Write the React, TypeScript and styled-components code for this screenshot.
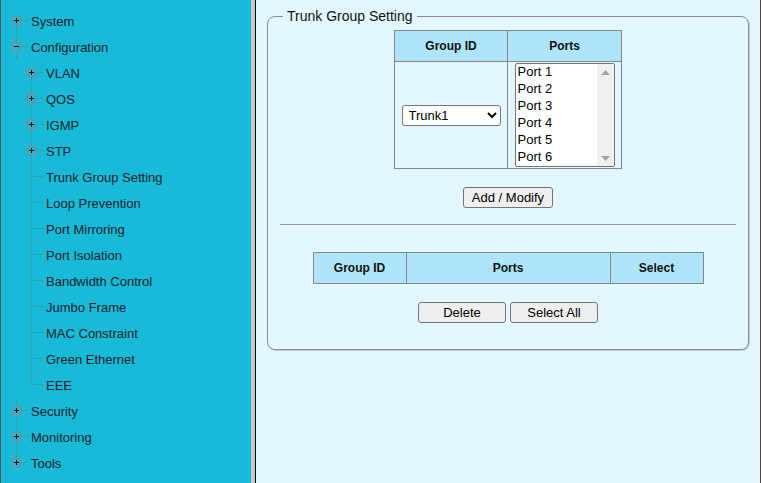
import styled, { createGlobalStyle } from "styled-components";

const GlobalStyle = createGlobalStyle`
  html, body {
    margin: 0;
    padding: 0;
    height: 100%;
  }
  body {
    font-family: "Liberation Sans", Arial, sans-serif;
    font-size: 13px;
    color: #000;
  }
  #root {
    height: 100%;
  }
`;

type Kind = "plus" | "minus" | "leaf";
type TreeNode = {
  label: string;
  level: 0 | 1;
  kind: Kind;
  first?: boolean;
  last?: boolean;
};

const tree: TreeNode[] = [
  { label: "System", level: 0, kind: "plus", first: true },
  { label: "Configuration", level: 0, kind: "minus" },
  { label: "VLAN", level: 1, kind: "plus", first: true },
  { label: "QOS", level: 1, kind: "plus" },
  { label: "IGMP", level: 1, kind: "plus" },
  { label: "STP", level: 1, kind: "plus" },
  { label: "Trunk Group Setting", level: 1, kind: "leaf" },
  { label: "Loop Prevention", level: 1, kind: "leaf" },
  { label: "Port Mirroring", level: 1, kind: "leaf" },
  { label: "Port Isolation", level: 1, kind: "leaf" },
  { label: "Bandwidth Control", level: 1, kind: "leaf" },
  { label: "Jumbo Frame", level: 1, kind: "leaf" },
  { label: "MAC Constraint", level: 1, kind: "leaf" },
  { label: "Green Ethernet", level: 1, kind: "leaf" },
  { label: "EEE", level: 1, kind: "leaf", last: true },
  { label: "Security", level: 0, kind: "plus" },
  { label: "Monitoring", level: 0, kind: "plus" },
  { label: "Tools", level: 0, kind: "plus", last: true },
];

const ports = ["Port 1", "Port 2", "Port 3", "Port 4", "Port 5", "Port 6"];

const Connector = ({ kind, first, last }: { kind: Kind; first?: boolean; last?: boolean }) => (
  <svg width={20} height={26} style={{ flex: "none" }}>
    <line x1={8.5} x2={8.5} y1={first ? 13 : 0} y2={last ? 13 : 26} stroke="#5f7d86" strokeDasharray="1 1" />
    <line x1={kind === "leaf" ? 9 : 13} x2={20} y1={12.5} y2={12.5} stroke="#5f7d86" strokeDasharray="1 1" />
    {kind !== "leaf" && (
      <>
        <rect x={4.5} y={8.5} width={8} height={8} fill="#17bbd7" stroke="#9b7f82" />
        <line x1={6} x2={11} y1={12.5} y2={12.5} stroke="#000" />
        {kind === "plus" && <line x1={8.5} x2={8.5} y1={10} y2={15} stroke="#000" />}
      </>
    )}
  </svg>
);

const Arrow = ({ up }: { up?: boolean }) => (
  <svg width={9} height={5}>
    <polygon points={up ? "0,5 9,5 4.5,0" : "0,0 9,0 4.5,5"} fill="#a3a3a3" />
  </svg>
);

export default function App() {
  return (
    <>
      <GlobalStyle />
      <Page>
        <Sidebar>
          {tree.map((n) => (
            <TreeRow key={n.label} level={n.level}>
              <Connector kind={n.kind} first={n.first} last={n.last} />
              <TreeLabel>{n.label}</TreeLabel>
            </TreeRow>
          ))}
        </Sidebar>
        <Divider />
        <Main>
          <Panel>
            <Legend>Trunk Group Setting</Legend>
            <GridTable width={227}>
              <colgroup>
                <col style={{ width: 113 }} />
                <col style={{ width: 114 }} />
              </colgroup>
              <thead>
                <tr>
                  <HeadCell>Group ID</HeadCell>
                  <HeadCell>Ports</HeadCell>
                </tr>
              </thead>
              <tbody>
                <tr>
                  <BodyCell>
                    <GroupSelect defaultValue="Trunk1">
                      <option>Trunk1</option>
                      <option>Trunk2</option>
                      <option>Trunk3</option>
                      <option>Trunk4</option>
                    </GroupSelect>
                  </BodyCell>
                  <BodyCell>
                    <ListBox>
                      <OptionList>
                        {ports.map((p) => (
                          <PortOption key={p}>{p}</PortOption>
                        ))}
                      </OptionList>
                      <ScrollTrack>
                        <Arrow up />
                        <Arrow />
                      </ScrollTrack>
                    </ListBox>
                  </BodyCell>
                </tr>
              </tbody>
            </GridTable>
            <ButtonRow top={18}>
              <Button width={90}>Add / Modify</Button>
            </ButtonRow>
            <Rule />
            <GridTable width={390} top={26}>
              <colgroup>
                <col style={{ width: 93 }} />
                <col style={{ width: 204 }} />
                <col style={{ width: 93 }} />
              </colgroup>
              <thead>
                <tr>
                  <HeadCell>Group ID</HeadCell>
                  <HeadCell>Ports</HeadCell>
                  <HeadCell>Select</HeadCell>
                </tr>
              </thead>
            </GridTable>
            <ButtonRow top={18}>
              <Button width={88}>Delete</Button>
              <Button width={88}>Select All</Button>
            </ButtonRow>
          </Panel>
        </Main>
      </Page>
    </>
  );
}

const Page = styled.div`
  display: flex;
  height: 100vh;
  overflow: hidden;
`;

const Sidebar = styled.div`
  flex: none;
  width: 251px;
  box-sizing: border-box;
  padding-top: 8px;
  background-color: #17bbd7;
  border-left: 1px solid #4d5a5e;
`;

const TreeRow = styled.div<{ level: 0 | 1 }>`
  display: flex;
  align-items: center;
  height: 26px;
  padding-left: ${({ level }) => (level === 0 ? 7 : 22)}px;
`;

const TreeLabel = styled.span`
  margin-left: 3px;
  font-size: 13px;
  color: #111b2a;
  white-space: nowrap;
`;

const Divider = styled.div`
  width: 4px;
  flex: none;
  background-color: #c9c9c9;
  border-right: 1px solid #000;
`;

const Main = styled.div`
  flex: 1;
  background-color: #e3f7fe;
  border-right: 1px solid #5b3f3f;
  padding: 8px 11px 0 11px;
`;

const Panel = styled.fieldset`
  margin: 0;
  padding: 6px 12px 26px;
  border: 1px solid #8a8a8a;
  border-radius: 8px;
  box-shadow: 1px 1px 0 #c4cdd0;
  min-width: 0;
`;

const Legend = styled.legend`
  margin-left: 3px;
  padding: 0 4px;
  font-size: 14px;
  line-height: 16px;
  color: #111;
`;

const GridTable = styled.table<{ width: number; top?: number }>`
  border-collapse: collapse;
  width: ${({ width }) => width}px;
  margin: ${({ top }) => top ?? 0}px auto 0;
  table-layout: fixed;
`;

const HeadCell = styled.th`
  height: 30px;
  padding: 0;
  background-color: #afe5fb;
  border: 1px solid #878787;
  font-size: 12px;
  font-weight: bold;
  color: #111;
`;

const BodyCell = styled.td`
  height: 106px;
  padding: 0;
  border: 1px solid #878787;
  text-align: center;
  vertical-align: middle;
`;

const GroupSelect = styled.select`
  width: 99px;
  height: 21px;
  font-family: "Liberation Sans", Arial, sans-serif;
  font-size: 13px;
  border: 1px solid #767676;
  border-radius: 3px;
  background: #fff;
  color: #000;
  padding: 0 2px;
`;

const ListBox = styled.div`
  display: flex;
  width: 100px;
  height: 104px;
  margin: 0 auto;
  box-sizing: border-box;
  border: 1px solid #767676;
  border-radius: 2px;
  background: #fff;
  text-align: left;
  overflow: hidden;
`;

const OptionList = styled.div`
  flex: 1;
  margin-top: -1px;
  padding-left: 2px;
`;

const PortOption = styled.div`
  font-size: 13px;
  line-height: 17px;
  color: #000;
`;

const ScrollTrack = styled.div`
  width: 17px;
  background: #f0f0f0;
  display: flex;
  flex-direction: column;
  align-items: center;
  justify-content: space-between;
  padding: 6px 0 5px;
`;

const ButtonRow = styled.div<{ top: number }>`
  display: flex;
  justify-content: center;
  gap: 4px;
  margin-top: ${({ top }) => top}px;
`;

const Button = styled.button<{ width: number }>`
  width: ${({ width }) => width}px;
  height: 21px;
  padding: 0;
  font-family: "Liberation Sans", Arial, sans-serif;
  font-size: 13px;
  color: #000;
  background-color: #efefef;
  border: 1px solid #767676;
  border-radius: 3px;
`;

const Rule = styled.hr`
  margin: 16px 0 0;
  border: none;
  border-top: 1px solid #9a9a9a;
  border-bottom: 1px solid #eef8fc;
`;
